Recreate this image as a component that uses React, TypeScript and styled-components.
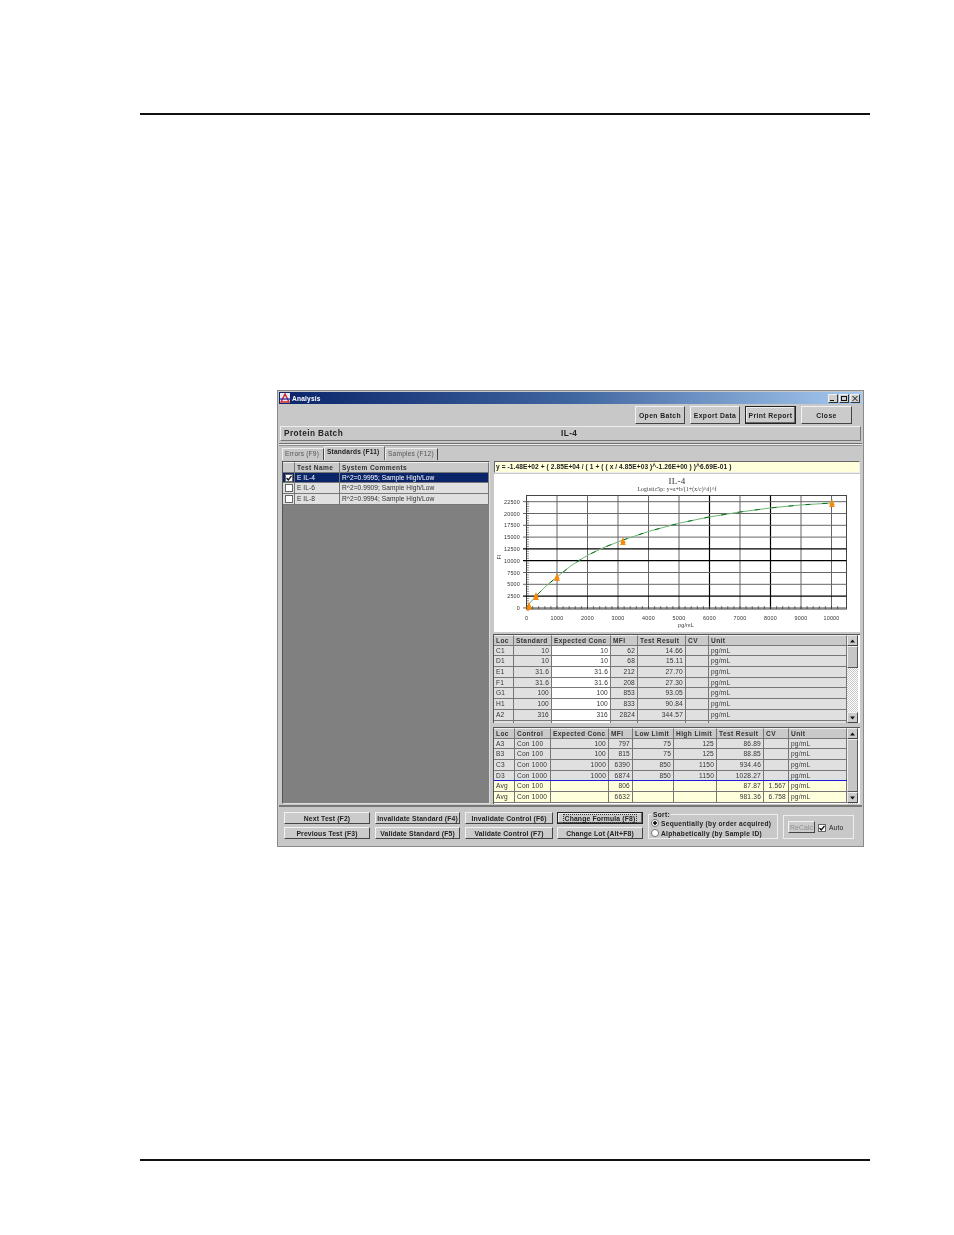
import React from 'react';
import styled, { createGlobalStyle } from 'styled-components';

const GlobalStyle = createGlobalStyle`
  html, body {
    margin: 0;
    background: #fff;
  }
  * {
    box-sizing: border-box;
  }
`;

const Page = styled.div`
  width: 954px;
  height: 1235px;
  padding-top: 113px;
  overflow: hidden;
`;

const Rule = styled.div<{ $top?: number }>`
  width: 730px;
  height: 2px;
  margin: ${(p) => p.$top ?? 0}px 0 0 140px;
  background: #111;
`;

const Win = styled.div`
  width: 587px;
  height: 457px;
  margin: 275px 0 0 277px;
  padding: 1px;
  border: 1px solid #8a8a8a;
  background: #c8c8c8;
  color: #222;
  font: 6.6px 'Liberation Sans', Arial, sans-serif;
  letter-spacing: 0.2px;
  filter: blur(0.3px);
`;

const TitleBar = styled.div`
  height: 12px;
  display: flex;
  align-items: center;
  padding: 0 2px 0 1px;
  background: linear-gradient(90deg, #0a246a 0%, #3f659f 50%, #a6caf0 100%);
  color: #fff;
  font-weight: bold;
`;

const TitleText = styled.span`
  flex: 1;
  margin-left: 2px;
`;

const WinButton = styled.span`
  width: 10px;
  height: 9px;
  margin-left: 1px;
  background: #d0d0d0;
  border: 1px solid;
  border-color: #f0f0f0 #333 #333 #f0f0f0;
  display: flex;
  align-items: center;
  justify-content: center;
`;

const Toolbar = styled.div`
  height: 20px;
  display: flex;
  justify-content: flex-end;
  gap: 5px;
  padding: 2px 10px 0 0;
`;

const RaisedButton = styled.button<{ $w: number; $focus?: boolean; $off?: boolean }>`
  width: ${(p) => p.$w}px;
  height: 100%;
  padding: 0;
  background: #cbcbcb;
  border: 1px solid;
  border-color: ${(p) => (p.$focus ? '#222' : '#f2f2f2 #444 #444 #f2f2f2')};
  box-shadow: ${(p) => (p.$focus ? 'inset -1px -1px 0 #666, inset 1px 1px 0 #eee' : 'none')};
  color: ${(p) => (p.$off ? '#8e8e8e' : '#222')};
  font: ${(p) => (p.$off ? 'normal' : 'bold')} 6.8px 'Liberation Sans', Arial, sans-serif;
  letter-spacing: 0.4px;
  white-space: nowrap;
`;

const FormulaLabel = styled.span`
  display: inline-block;
  padding: 0 1px;
  border: 1px dotted #333;
`;

const BatchBar = styled.div`
  height: 15px;
  margin: 2px 1px 0 1px;
  padding-left: 3px;
  display: flex;
  align-items: center;
  border: 1px solid;
  border-color: #eee #777 #777 #eee;
  font-weight: bold;
  font-size: 8.2px;
  letter-spacing: 0.45px;
`;

const BatchName = styled.span`
  width: 277px;
`;

const Groove = styled.div`
  height: 3px;
  margin-top: 2px;
  border-top: 1px solid #6e6e6e;
  border-bottom: 1px solid #8f8f8f;
  background: #eee;
`;

const TabRow = styled.div`
  height: 14px;
  display: flex;
  align-items: flex-end;
  padding-left: 3px;
  background: #c8c8c8;
`;

const Tab = styled.div<{ $w: number; $active?: boolean }>`
  width: ${(p) => p.$w}px;
  height: ${(p) => (p.$active ? 14 : 12)}px;
  padding: 1px 0 0 2px;
  border-top: 1px solid #eee;
  border-left: 1px solid #eee;
  border-right: 1px solid ${(p) => (p.$active ? '#666' : '#444')};
  font-weight: ${(p) => (p.$active ? 'bold' : 'normal')};
  color: ${(p) => (p.$active ? '#222' : '#555')};
`;

const Body = styled.div`
  height: 346px;
  display: flex;
  gap: 3px;
  padding: 1px 1px 0 3px;
`;

const LeftPanel = styled.div`
  width: 209px;
  height: 343px;
  display: flex;
  flex-direction: column;
  border: 1px solid #555;
  border-right-color: #ddd;
  border-bottom-color: #ddd;
  background: #808080;
  letter-spacing: 0.05px;
`;

const RightPanel = styled.div`
  width: 368px;
  display: flex;
  flex-direction: column;
`;

const Row = styled.div<{ $cols: string; $h?: number; $tone?: 'selected' | 'head' | 'plain' }>`
  display: grid;
  grid-template-columns: ${(p) => p.$cols};
  height: ${(p) => p.$h ?? 10.7}px;
  flex: none;
  background: ${(p) => (p.$tone === 'selected' ? '#0a246a' : p.$tone === 'head' ? '#c9c9c9' : '#e0e0e0')};
  color: ${(p) => (p.$tone === 'selected' ? '#fff' : '#333')};
  border-bottom: 1px solid #777;
  font-weight: ${(p) => (p.$tone === 'head' ? 'bold' : 'normal')};
  letter-spacing: ${(p) => (p.$tone === 'head' ? '0.38px' : 'inherit')};
`;

const Cell = styled.div<{ $right?: boolean; $fill?: string; $head?: boolean }>`
  padding: 0 2px;
  line-height: 9.5px;
  text-align: ${(p) => (p.$right ? 'right' : 'left')};
  background: ${(p) => p.$fill ?? 'transparent'};
  border-right: 1px solid #777;
  border-top: ${(p) => (p.$head ? '1px solid #efefef' : 'none')};
  white-space: nowrap;
  overflow: hidden;
`;

const CheckBox = styled.span`
  display: flex;
  align-items: center;
  justify-content: center;
  width: 8px;
  height: 8px;
  margin-top: 1px;
  background: #fff;
  border: 1px solid #666;
`;

const Formula = styled.div`
  height: 12px;
  margin: 0 1px;
  padding-left: 1px;
  background: #ffffdc;
  border: 1px solid;
  border-color: #666 #eee #eee #666;
  font-weight: bold;
  line-height: 10px;
  letter-spacing: 0.08px;
`;

const ChartBox = styled.div`
  height: 158px;
  margin: 1px 1px 0 1px;
  background: #fff;
`;

const GridBox = styled.div<{ $h: number; $top: number }>`
  display: flex;
  height: ${(p) => p.$h}px;
  margin: ${(p) => p.$top}px 1px 0 0;
  border-top: 1px solid #555;
  border-left: 1px solid #555;
  background: #fff;
  overflow: hidden;
`;

const GridBody = styled.div`
  width: 353px;
  display: flex;
  flex-direction: column;
  flex: none;
`;

const Scrollbar = styled.div`
  width: 11px;
  display: flex;
  flex-direction: column;
  flex: none;
  background: repeating-conic-gradient(#fff 0 25%, #c8c8c8 0 50%) 0 0 / 2px 2px;
`;

const ScrollEnd = styled.div`
  height: 11px;
  flex: none;
  display: flex;
  align-items: center;
  justify-content: center;
  background: #cbcbcb;
  border: 1px solid;
  border-color: #eee #444 #444 #eee;
`;

const Thumb = styled.div<{ $h: number }>`
  height: ${(p) => p.$h}px;
  flex: none;
  background: #c6c6c6;
  border: 1px solid;
  border-color: #eee #555 #555 #eee;
`;

const ScrollGap = styled.div`
  flex: 1;
`;

const BlueLine = styled.div`
  height: 1px;
  flex: none;
  margin-top: -1px;
  background: #1a1ae0;
`;

const BottomBar = styled.div`
  height: 41px;
  display: flex;
  align-items: flex-start;
  margin-top: -1px;
  padding: 5px 0 0 5px;
  border-top: 2px solid #777;
`;

const ButtonCol = styled.div<{ $w: number; $gap: number }>`
  width: ${(p) => p.$w}px;
  margin-right: ${(p) => p.$gap}px;
  display: flex;
  flex-direction: column;
  gap: 3px;
  height: 27px;
`;

const ColButton = styled(RaisedButton)`
  height: 12px;
  flex: none;
  letter-spacing: 0.15px;
`;

const SortGroup = styled.fieldset`
  position: relative;
  width: 130px;
  height: 25px;
  margin: 2px 5px 0 5px;
  padding: 3px 0 0 2px;
  border: 1px solid #eee;
  font-weight: bold;
  letter-spacing: 0.3px;
`;

const SortLegend = styled.span`
  position: absolute;
  top: -4px;
  left: 3px;
  padding: 0 1px;
  background: #c8c8c8;
`;

const RadioRow = styled.div`
  display: flex;
  align-items: center;
  gap: 2px;
  height: 10px;
`;

const Radio = styled.span<{ $on?: boolean }>`
  width: 8px;
  height: 8px;
  border-radius: 50%;
  background: ${(p) => (p.$on ? 'radial-gradient(circle, #111 0 1.5px, #fff 2px)' : '#fff')};
  border: 1px solid #777;
`;

const RecalcGroup = styled.div`
  width: 71px;
  height: 24px;
  margin-top: 3px;
  display: flex;
  align-items: center;
  gap: 3px;
  padding-left: 4px;
  border: 1px solid #eee;
`;

const RecalcButton = styled(RaisedButton)`
  height: 12px;
  flex: none;
  letter-spacing: 0.1px;
`;

const AutoLabel = styled.span`
  display: flex;
  align-items: center;
  gap: 3px;
`;

const CheckMark = () => (
  <svg width="6" height="6" viewBox="0 0 6 6">
    <path d="M0.5 3 L2.3 5 L5.5 0.8" fill="none" stroke="#111" strokeWidth="1.3" />
  </svg>
);

const Arrow = ({ down }: { down?: boolean }) => (
  <svg width="5" height="4" viewBox="0 0 5 4">
    <path d={down ? 'M0 0.5 H5 L2.5 3.5 Z' : 'M0 3.5 H5 L2.5 0.5 Z'} fill="#111" />
  </svg>
);

const LOGO = (
  <svg width="10" height="10" viewBox="0 0 10 10">
    <rect width="10" height="10" fill="#e8e8f4" />
    <path d="M1 9 L5 1 L9 9 Z" fill="none" stroke="#c22" strokeWidth="1.4" />
    <path d="M0 6 H10" stroke="#22a" strokeWidth="1.2" />
  </svg>
);

const xLabels = ['0', '1000', '2000', '3000', '4000', '5000', '6000', '7000', '8000', '9000', '10000'];
const yLabels = ['22500', '20000', '17500', '15000', '12500', '10000', '7500', '5000', '2500', '0'];
const xAt = (i: number) => 526.5 + i * 30.5;
const yAt = (i: number) => 501.7 + i * 11.8;
const strongX = [6, 8];
const strongY = [4, 5, 8];
const curve =
  'M527 608 L529 604 L536 596 L546 586 L557 577 L572 565 L588 555 L605 547 L623 540 L650 531 L680 523 L709 517 L740 512 L770 508 L800 505 L832 503';
const markers: [number, number][] = [
  [529, 606],
  [536, 596],
  [557, 577],
  [623, 541],
  [832, 503],
];

const Chart = () => (
  <svg width="366" height="158" viewBox="494 474 366 158" style={{ display: 'block' }}>
    <text x="677" y="484" textAnchor="middle" fontFamily="'Liberation Serif', serif" fontSize="9" fill="#333">
      IL-4
    </text>
    <text x="677" y="491" textAnchor="middle" fontFamily="'Liberation Serif', serif" fontSize="5.6" fill="#333">
      Logistic5p: y=a+b/(1+(x/c)^d)^f
    </text>
    <rect x="526.5" y="495.5" width="320" height="113.5" fill="none" stroke="#444" />
    {xLabels.map((l, i) => (
      <g key={l}>
        {i > 0 && (
          <line
            x1={xAt(i)}
            x2={xAt(i)}
            y1="495.5"
            y2="609"
            stroke={strongX.includes(i) ? '#000' : '#666'}
            strokeWidth={strongX.includes(i) ? 1.2 : 1}
          />
        )}
        <text x={xAt(i)} y="620" textAnchor="middle" fontFamily="'Liberation Sans', sans-serif" fontSize="5.4" fill="#333">
          {l}
        </text>
      </g>
    ))}
    {yLabels.map((l, i) => (
      <g key={l}>
        <line
          x1="523"
          x2="846.5"
          y1={yAt(i)}
          y2={yAt(i)}
          stroke={strongY.includes(i) ? '#000' : '#666'}
          strokeWidth={strongY.includes(i) ? 1.2 : 1}
        />
        <text x="520" y={yAt(i) + 2} textAnchor="end" fontFamily="'Liberation Sans', sans-serif" fontSize="5.4" fill="#333">
          {l}
        </text>
      </g>
    ))}
    {Array.from({ length: 52 }, (_, i) => (
      <line key={i} x1={526.5 + i * 6.1} x2={526.5 + i * 6.1} y1="606" y2="609" stroke="#222" strokeWidth="0.6" />
    ))}
    {Array.from({ length: 47 }, (_, i) => (
      <line key={i} x1="526.5" x2="529" y1={501.7 + i * 2.36} y2={501.7 + i * 2.36} stroke="#222" strokeWidth="0.5" />
    ))}
    <path d={curve} fill="none" stroke="#6fb877" strokeWidth="1" />
    <path d={curve} fill="none" stroke="#0a6e1e" strokeWidth="1" strokeDasharray="5 12" />
    {markers.map(([x, y]) => (
      <g key={x} fill="#f58a0c">
        <path d={`M${x - 3} ${y + 4} L${x} ${y - 1} L${x + 3} ${y + 4} Z`} />
        <path d={`M${x - 2.6} ${y + 2} L${x} ${y - 4} L${x + 2.6} ${y + 2} Z`} />
      </g>
    ))}
    <text
      transform="translate(501 557) rotate(-90)"
      textAnchor="middle"
      fontFamily="'Liberation Sans', sans-serif"
      fontSize="5.2"
      fill="#333"
    >
      FI
    </text>
    <text x="686" y="627" textAnchor="middle" fontFamily="'Liberation Sans', sans-serif" fontSize="5.4" fill="#333">
      pg/mL
    </text>
  </svg>
);

const LIST_COLS = '12px 45px 1fr';
const STD_COLS = '20px 38px 59px 27px 48px 23px 1fr';
const CTL_COLS = '21px 36px 58px 24px 41px 43px 47px 25px 1fr';

const standards = [
  ['C1', '10', '10', '62', '14.66'],
  ['D1', '10', '10', '68', '15.11'],
  ['E1', '31.6', '31.6', '212', '27.70'],
  ['F1', '31.6', '31.6', '208', '27.30'],
  ['G1', '100', '100', '853', '93.05'],
  ['H1', '100', '100', '833', '90.84'],
  ['A2', '316', '316', '2824', '344.57'],
];

const controls = [
  ['A3', 'Con 100', '100', '797', '75', '125', '86.89', ''],
  ['B3', 'Con 100', '100', '815', '75', '125', '88.85', ''],
  ['C3', 'Con 1000', '1000', '6390', '850', '1150', '934.46', ''],
  ['D3', 'Con 1000', '1000', '6874', '850', '1150', '1028.27', ''],
];

const averages = [
  ['Avg', 'Con 100', '', '806', '', '', '87.87', '1.567'],
  ['Avg', 'Con 1000', '', '6632', '', '', '981.36', '6.758'],
];

const YELLOW = '#ffffdc';

const App: React.FC = () => (
  <Page>
    <GlobalStyle />
    <Rule />
    <Win>
      <TitleBar>
        {LOGO}
        <TitleText>Analysis</TitleText>
        <WinButton>
          <svg width="6" height="5" viewBox="0 0 6 5">
            <path d="M0 4.5 H4" stroke="#111" />
          </svg>
        </WinButton>
        <WinButton>
          <svg width="6" height="5" viewBox="0 0 6 5">
            <rect x="0.5" y="0.5" width="5" height="4" fill="none" stroke="#111" />
          </svg>
        </WinButton>
        <WinButton>
          <svg width="6" height="5" viewBox="0 0 6 5">
            <path d="M0.5 0 L5.5 5 M5.5 0 L0.5 5" stroke="#111" />
          </svg>
        </WinButton>
      </TitleBar>
      <Toolbar>
        <RaisedButton $w={50}>Open Batch</RaisedButton>
        <RaisedButton $w={50}>Export Data</RaisedButton>
        <RaisedButton $w={51} $focus>
          Print Report
        </RaisedButton>
        <RaisedButton $w={51}>Close</RaisedButton>
      </Toolbar>
      <BatchBar>
        <BatchName>Protein Batch</BatchName>
        <span>IL-4</span>
      </BatchBar>
      <Groove />
      <TabRow>
        <Tab $w={42}>Errors (F9)</Tab>
        <Tab $w={61} $active>
          Standards (F11)
        </Tab>
        <Tab $w={53}>Samples (F12)</Tab>
      </TabRow>
      <Body>
        <LeftPanel>
          <Row $cols={LIST_COLS} $tone="head">
            <Cell $head />
            <Cell $head>Test Name</Cell>
            <Cell $head>System Comments</Cell>
          </Row>
          <Row $cols={LIST_COLS} $tone="selected">
            <Cell>
              <CheckBox>
                <CheckMark />
              </CheckBox>
            </Cell>
            <Cell>E IL-4</Cell>
            <Cell>R^2=0.9995; Sample High/Low</Cell>
          </Row>
          <Row $cols={LIST_COLS}>
            <Cell>
              <CheckBox />
            </Cell>
            <Cell>E IL-6</Cell>
            <Cell>R^2=0.9909; Sample High/Low</Cell>
          </Row>
          <Row $cols={LIST_COLS}>
            <Cell>
              <CheckBox />
            </Cell>
            <Cell>E IL-8</Cell>
            <Cell>R^2=0.9994; Sample High/Low</Cell>
          </Row>
        </LeftPanel>
        <RightPanel>
          <Formula>y = -1.48E+02 + ( 2.85E+04 / ( 1 + ( ( x / 4.85E+03 )^-1.26E+00 ) )^6.69E-01 )</Formula>
          <ChartBox>
            <Chart />
          </ChartBox>
          <GridBox $h={89} $top={2}>
            <GridBody>
              <Row $cols={STD_COLS} $tone="head">
                {['Loc', 'Standard', 'Expected Conc', 'MFI', 'Test Result', 'CV', 'Unit'].map((h) => (
                  <Cell key={h} $head>
                    {h}
                  </Cell>
                ))}
              </Row>
              {standards.map((r) => (
                <Row key={r[0]} $cols={STD_COLS}>
                  <Cell>{r[0]}</Cell>
                  <Cell $right>{r[1]}</Cell>
                  <Cell $right $fill="#fff">
                    {r[2]}
                  </Cell>
                  <Cell $right>{r[3]}</Cell>
                  <Cell $right>{r[4]}</Cell>
                  <Cell />
                  <Cell>pg/mL</Cell>
                </Row>
              ))}
              <Row $cols={STD_COLS}>
                <Cell />
                <Cell />
                <Cell $fill="#fff" />
                <Cell />
                <Cell />
                <Cell />
                <Cell />
              </Row>
            </GridBody>
            <Scrollbar>
              <ScrollEnd>
                <Arrow />
              </ScrollEnd>
              <Thumb $h={22} />
              <ScrollGap />
              <ScrollEnd>
                <Arrow down />
              </ScrollEnd>
            </Scrollbar>
          </GridBox>
          <GridBox $h={77} $top={4}>
            <GridBody>
              <Row $cols={CTL_COLS} $tone="head">
                {[
                  'Loc',
                  'Control',
                  'Expected Conc',
                  'MFI',
                  'Low Limit',
                  'High Limit',
                  'Test Result',
                  'CV',
                  'Unit',
                ].map((h) => (
                  <Cell key={h} $head>
                    {h}
                  </Cell>
                ))}
              </Row>
              {controls.map((r) => (
                <Row key={r[0]} $cols={CTL_COLS}>
                  <Cell>{r[0]}</Cell>
                  <Cell>{r[1]}</Cell>
                  {r.slice(2).map((v, i) => (
                    <Cell key={i} $right>
                      {v}
                    </Cell>
                  ))}
                  <Cell>pg/mL</Cell>
                </Row>
              ))}
              <BlueLine />
              {averages.map((r) => (
                <Row key={r[1]} $cols={CTL_COLS}>
                  <Cell $fill={YELLOW}>{r[0]}</Cell>
                  <Cell $fill={YELLOW}>{r[1]}</Cell>
                  {r.slice(2).map((v, i) => (
                    <Cell key={i} $right $fill={YELLOW}>
                      {v}
                    </Cell>
                  ))}
                  <Cell $fill={YELLOW}>pg/mL</Cell>
                </Row>
              ))}
            </GridBody>
            <Scrollbar>
              <ScrollEnd>
                <Arrow />
              </ScrollEnd>
              <Thumb $h={53} />
              <ScrollEnd>
                <Arrow down />
              </ScrollEnd>
            </Scrollbar>
          </GridBox>
        </RightPanel>
      </Body>
      <BottomBar>
        <ButtonCol $w={86} $gap={5}>
          <ColButton $w={86}>Next Test (F2)</ColButton>
          <ColButton $w={86}>Previous Test (F3)</ColButton>
        </ButtonCol>
        <ButtonCol $w={85} $gap={5}>
          <ColButton $w={85}>Invalidate Standard (F4)</ColButton>
          <ColButton $w={85}>Validate Standard (F5)</ColButton>
        </ButtonCol>
        <ButtonCol $w={88} $gap={4}>
          <ColButton $w={88}>Invalidate Control (F6)</ColButton>
          <ColButton $w={88}>Validate Control (F7)</ColButton>
        </ButtonCol>
        <ButtonCol $w={86} $gap={0}>
          <ColButton $w={86} $focus>
            <FormulaLabel>Change Formula (F8)</FormulaLabel>
          </ColButton>
          <ColButton $w={86}>Change Lot (Alt+F8)</ColButton>
        </ButtonCol>
        <SortGroup>
          <SortLegend>Sort:</SortLegend>
          <RadioRow>
            <Radio $on />
            Sequentially (by order acquired)
          </RadioRow>
          <RadioRow>
            <Radio />
            Alphabetically (by Sample ID)
          </RadioRow>
        </SortGroup>
        <RecalcGroup>
          <RecalcButton $w={27} $off>
            ReCalc
          </RecalcButton>
          <AutoLabel>
            <CheckBox>
              <CheckMark />
            </CheckBox>
            Auto
          </AutoLabel>
        </RecalcGroup>
      </BottomBar>
    </Win>
    <Rule $top={312} />
  </Page>
);

export default App;
